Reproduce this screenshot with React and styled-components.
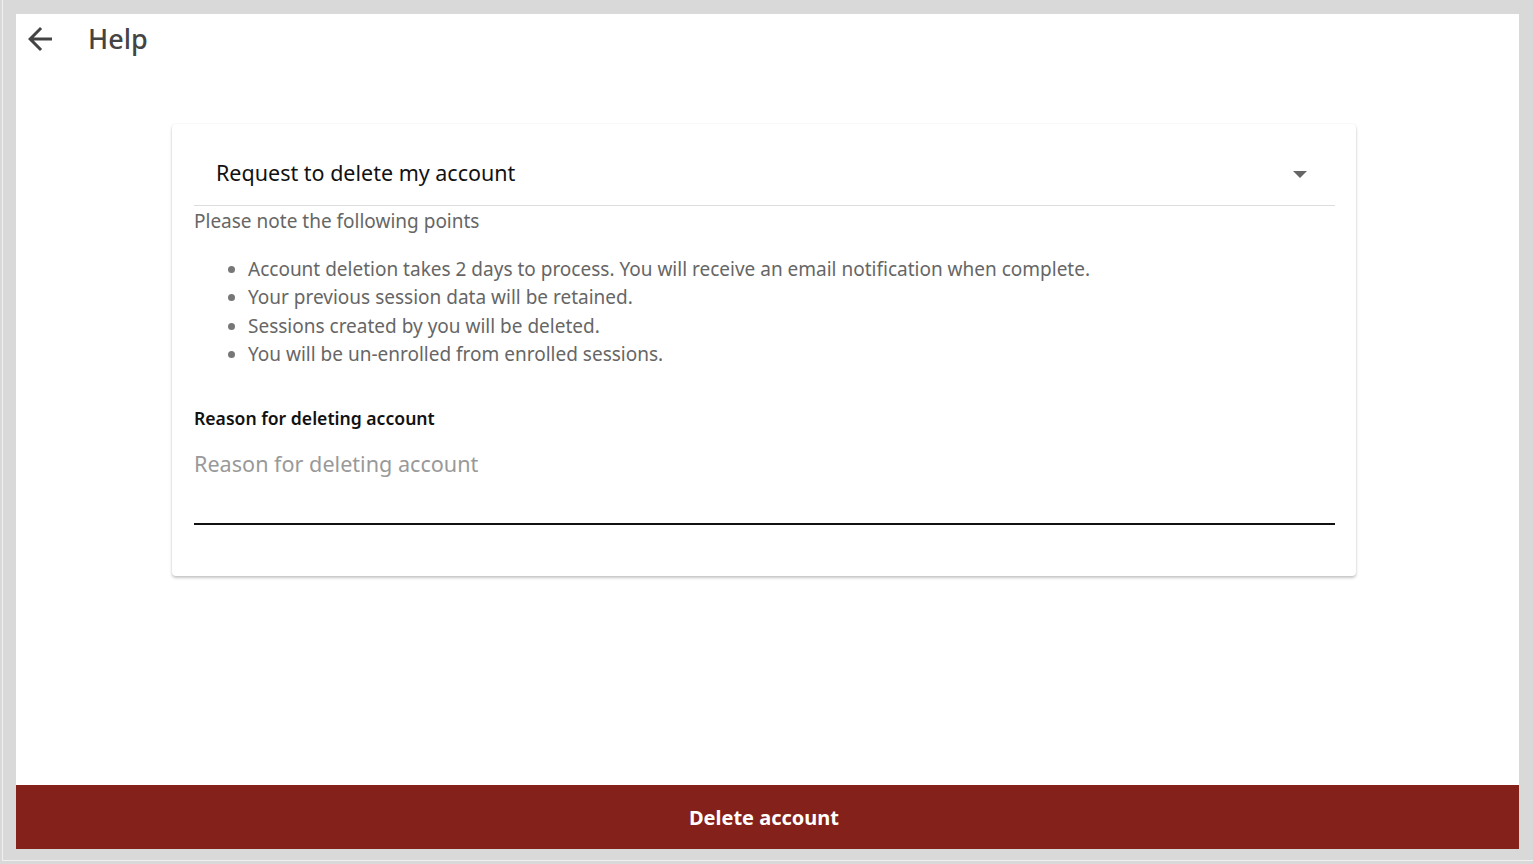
import React from "react";
import styled, { createGlobalStyle } from "styled-components";

const GlobalStyle = createGlobalStyle`
  html, body {
    margin: 0;
    padding: 0;
    background: #d9d9d9;
    font-family: "Noto Sans", "Open Sans", sans-serif;
  }
`;

const Frame = styled.div`
  width: 1533px;
  height: 864px;
  box-sizing: border-box;
  padding: 14px 14px 15px 16px;
  display: flex;
  box-shadow: inset 2px -3px 0 #d9d9d9, inset 3px -4px 0 #f0f0f0;
`;

const Screen = styled.div`
  flex: 1;
  background: #fff;
  display: flex;
  flex-direction: column;
`;

const TopBar = styled.div`
  height: 50px;
  display: flex;
  align-items: center;
  padding-left: 6px;
`;

const BackButton = styled.button`
  border: 0;
  background: none;
  padding: 0;
  width: 36px;
  height: 36px;
  display: flex;
  align-items: center;
  justify-content: center;
  color: #444;
  cursor: pointer;
`;

const Title = styled.h1`
  margin: -2px 0 0 30px;
  font-size: 27px;
  font-weight: 500;
  color: #444;
`;

const Body = styled.div`
  flex: 1;
  display: flex;
  justify-content: center;
  padding-top: 60px;
`;

const Card = styled.div`
  width: 1184px;
  height: 452px;
  box-sizing: border-box;
  margin-right: 7px;
  border-radius: 4px;
  background: #fff;
  box-shadow: 0 2px 3px rgba(0, 0, 0, 0.22), 0 0 2px rgba(0, 0, 0, 0.08);
  padding: 0 21px 0 22px;
`;

const Header = styled.div`
  height: 82px;
  display: flex;
  align-items: flex-end;
  justify-content: space-between;
  border-bottom: 1px solid #ddd;
  padding: 0 28px 18px 22px;
  box-sizing: border-box;
`;

const HeaderText = styled.span`
  font-size: 21.5px;
  color: #111;
  line-height: 28px;
`;

const Chevron = styled.svg`
  margin-bottom: 8px;
`;

const Note = styled.div`
  margin-top: 1px;
  font-size: 19px;
  color: #666;
  line-height: 28px;
`;

const Points = styled.ul`
  margin: 20px 0 0;
  padding-left: 54px;
  font-size: 19px;
  color: #666;
  line-height: 28.3px;

  li::marker {
    color: #777;
  }
`;

const Label = styled.div`
  margin-top: 38px;
  font-size: 17.6px;
  font-weight: 600;
  color: #111;
`;

const Input = styled.input`
  display: block;
  width: 100%;
  box-sizing: border-box;
  margin-top: 15px;
  height: 80px;
  padding: 0 0 42px;
  border: 0;
  border-bottom: 2px solid #111;
  font-family: inherit;
  font-size: 21.6px;
  color: #333;
  outline: none;

  &::placeholder {
    color: #999;
  }
`;

const DeleteBar = styled.button`
  height: 64px;
  border: 0;
  background: #84211a;
  color: #fff;
  font-family: inherit;
  font-size: 20px;
  font-weight: 700;
  cursor: pointer;
  padding-right: 13px;
`;

const points = [
  "Account deletion takes 2 days to process. You will receive an email notification when complete.",
  "Your previous session data will be retained.",
  "Sessions created by you will be deleted.",
  "You will be un-enrolled from enrolled sessions.",
];

export default function App() {
  return (
    <>
      <GlobalStyle />
      <Frame>
        <Screen>
          <TopBar>
            <BackButton aria-label="Back">
              <svg width="36" height="36" viewBox="0 0 24 24" fill="currentColor">
                <path d="M20 11H7.83l5.59-5.59L12 4l-8 8 8 8 1.41-1.41L7.83 13H20v-2z" />
              </svg>
            </BackButton>
            <Title>Help</Title>
          </TopBar>
          <Body>
            <Card>
              <Header>
                <HeaderText>Request to delete my account</HeaderText>
                <Chevron width="14" height="8" viewBox="0 0 14 8">
                  <path d="M0 0h14L7 7z" fill="#666" />
                </Chevron>
              </Header>
              <Note>Please note the following points</Note>
              <Points>
                {points.map((p) => (
                  <li key={p}>{p}</li>
                ))}
              </Points>
              <Label>Reason for deleting account</Label>
              <Input placeholder="Reason for deleting account" />
            </Card>
          </Body>
          <DeleteBar>Delete account</DeleteBar>
        </Screen>
      </Frame>
    </>
  );
}
